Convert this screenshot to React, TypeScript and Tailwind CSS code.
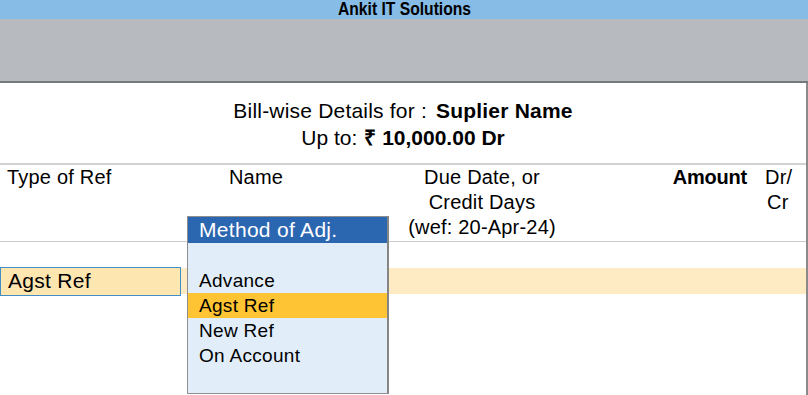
import React from "react";

export default function App() {
  const items = ["Advance", "Agst Ref", "New Ref", "On Account"];
  return (
    <div className="w-[808px] h-[395px] overflow-hidden bg-white text-black font-['Liberation_Sans',Arial,sans-serif]">
      <div className="h-[19px] bg-[#86bce5] flex items-center justify-center">
        <span className="inline-block scale-x-[0.87] font-bold text-[18px] leading-[19px]">
          Ankit IT Solutions
        </span>
      </div>
      <div className="h-[64px] bg-[#b7bbbf] border-b-2 border-[#76797c]" />
      <div className="relative h-[312px] border-r-2 border-[#8a8a8a]">
        <div className="h-[80px] flex flex-col items-center justify-center pt-[1px]">
          <div className="text-[21px] leading-[27px] tracking-[0.2px]">
            <span>Bill-wise Details for :</span>
            <span className="font-bold ml-[9px]">Suplier Name</span>
          </div>
          <div className="text-[21px] leading-[27px]">
            <span>Up to:</span>
            <span className="font-bold ml-[7px]">₹ 10,000.00 Dr</span>
          </div>
        </div>
        <div className="border-b-2 border-[#d2d2d2]" />
        <div className="h-[76px] grid grid-cols-[160px_192px_260px_136px_56px] text-[20px] leading-[25px] tracking-[0.2px]">
          <div className="pl-[7px]">Type of Ref</div>
          <div className="text-center">Name</div>
          <div className="text-center">
            <div>Due Date, or</div>
            <div>Credit Days</div>
            <div>(wef: 20-Apr-24)</div>
          </div>
          <div className="text-right font-bold pr-[1px] tracking-[-0.2px]">Amount</div>
          <div className="pl-[17px]">
            <div>Dr/</div>
            <div className="pl-[2px]">Cr</div>
          </div>
        </div>
        <div className="border-b border-[#cbcbcb]" />
        <div className="h-[26px]" />
        <div className="h-[26px] bg-[#feebc3] flex items-center">
          <div className="h-[29px] w-[181px] shrink-0 bg-[#fee6b0] border border-[#3f8ec6] flex items-center pl-[7px] text-[21px] tracking-[0.3px]">
            Agst Ref
          </div>
        </div>

        <div className="absolute left-[187px] top-[133px] w-[202px] h-[178px] border border-[#8e8e8e] border-r-2 border-r-[#858585] bg-[#e1eefa]">
          <div className="h-[26px] bg-[#2b66b1] text-white text-[21px] leading-[26px] pl-[11px] tracking-[0.3px]">
            Method of Adj.
          </div>
          <div className="h-[25px]" />
          {items.map((it) => (
            <div
              key={it}
              className={
                "h-[25px] leading-[25px] pl-[11px] text-[19px] tracking-[0.3px] " +
                (it === "Agst Ref" ? "bg-[#fec433]" : "")
              }
            >
              {it}
            </div>
          ))}
        </div>
      </div>
    </div>
  );
}
